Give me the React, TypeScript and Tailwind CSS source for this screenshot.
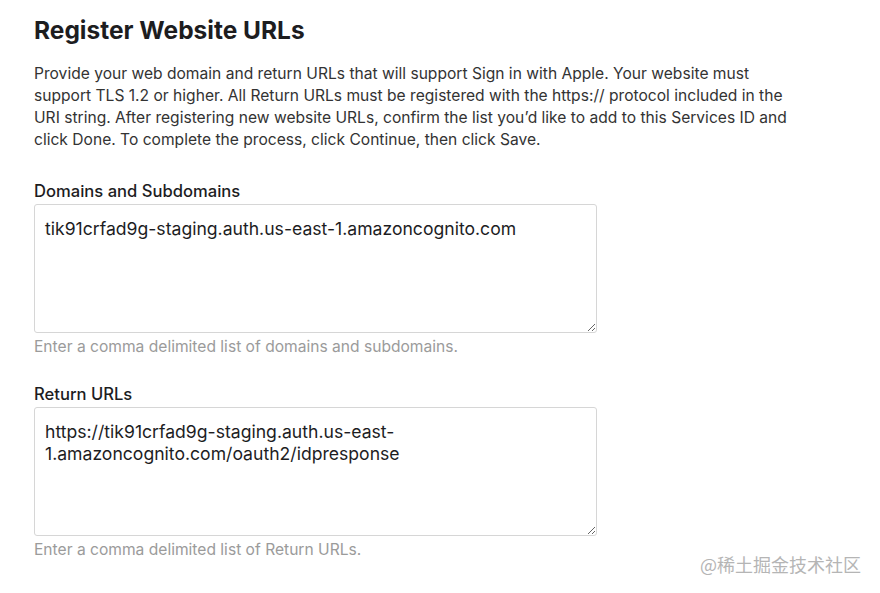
export default function App() {
  return (
    <div className="relative w-[880px] h-[593px] bg-white font-['Inter',sans-serif] text-[#333]">
      <div className="pl-[34px] pt-[16px] w-[846px]">
        <h1 className="text-[24.5px] leading-[28px] font-bold text-[#1d1d1f]">
          Register Website URLs
        </h1>
        <p className="mt-[19px] text-[15.6px] leading-[22px] text-[#333]">
          Provide your web domain and return URLs that will support Sign in with Apple. Your website must
          <br />
          support TLS 1.2 or higher. All Return URLs must be registered with the https:// protocol included in the
          <br />
          URI string. After registering new website URLs, confirm the list you’d like to add to this Services ID and
          <br />
          click Done. To complete the process, click Continue, then click Save.
        </p>

        <label className="block mt-[29px] text-[16.6px] leading-[22px] font-medium text-[#1d1d1f]">
          Domains and Subdomains
        </label>
        <textarea
          readOnly
          className="block mt-[2px] w-[563px] h-[129px] border border-[#d6d6d6] rounded-[3px] px-[10px] pt-[13px] pb-[9px] text-[17.6px] leading-[22px] text-[#1d1d1f] outline-none"
          defaultValue="tik91crfad9g-staging.auth.us-east-1.amazoncognito.com"
        />
        <p className="mt-[4px] text-[15.6px] leading-[20px] text-[#9b9b9b]">
          Enter a comma delimited list of domains and subdomains.
        </p>

        <label className="block mt-[26px] text-[16.6px] leading-[22px] font-medium text-[#1d1d1f]">
          Return URLs
        </label>
        <textarea
          readOnly
          className="block mt-[2px] w-[563px] h-[129px] border border-[#d6d6d6] rounded-[3px] px-[10px] pt-[13px] pb-[9px] text-[17.6px] leading-[22px] text-[#1d1d1f] outline-none"
          defaultValue="https://tik91crfad9g-staging.auth.us-east-1.amazoncognito.com/oauth2/idpresponse"
        />
        <p className="mt-[4px] text-[15.6px] leading-[20px] text-[#9b9b9b]">
          Enter a comma delimited list of Return URLs.
        </p>
      </div>

      <div className="absolute left-[700px] top-[553px] text-[18px] leading-[22px] text-[#b5b5b5] font-['Noto_Sans_CJK_SC',sans-serif]">
        @稀土掘金技术社区
      </div>
    </div>
  )
}
